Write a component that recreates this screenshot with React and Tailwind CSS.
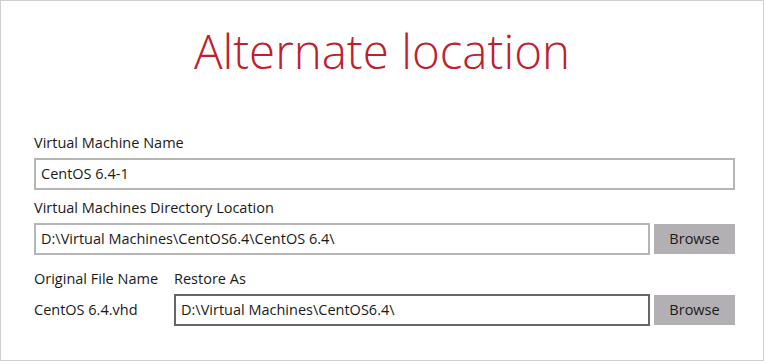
import React from 'react';

const font = { fontFamily: '"Open Sans", "Noto Sans", sans-serif' };

const Field = ({ value, dark }) => (
    <div
        className={`flex items-center h-[32px] px-[5px] border-2 bg-white text-[14.5px] text-[#1a1a1a] ${dark ? 'border-[#666666]' : 'border-[#b5b5b5]'} flex-1`}
    >
        {value}
    </div>
);

const BrowseButton = () => (
    <button className="w-[81px] h-[30px] bg-[#b2b0b2] text-[14.5px] text-[#1a1a1a] flex items-center justify-center">
        Browse
    </button>
);

const App = () => {
    return (
        <div className="w-[764px] h-[361px] border border-[#cfcfcf] bg-white" style={font}>
            <h1 className="mt-[20px] text-center text-[47.5px] leading-[60px] font-light text-[#c0202b]">
                Alternate location
            </h1>

            <div className="ml-[33px] w-[701px] mt-[53px] flex flex-col">
                <label className="text-[14.5px] leading-[18px] text-[#1a1a1a]">Virtual Machine Name</label>
                <div className="mt-[6px] flex">
                    <Field value="CentOS 6.4-1" />
                </div>

                <label className="mt-[9px] text-[14.5px] leading-[18px] text-[#1a1a1a]">Virtual Machines Directory Location</label>
                <div className="mt-[6px] flex items-center gap-[4px]">
                    <Field value="D:\Virtual Machines\CentOS6.4\CentOS 6.4\" />
                    <BrowseButton />
                </div>

                <div className="mt-[15px] flex text-[14.5px] leading-[18px] text-[#1a1a1a]">
                    <span className="w-[140px]">Original File Name</span>
                    <span>Restore As</span>
                </div>
                <div className="mt-[6px] flex items-center">
                    <span className="w-[140px] text-[14.5px] text-[#1a1a1a]">CentOS 6.4.vhd</span>
                    <div className="flex-1 flex items-center gap-[4px]">
                        <Field value="D:\Virtual Machines\CentOS6.4\" dark />
                        <BrowseButton />
                    </div>
                </div>
            </div>
        </div>
    );
};

export default App;
